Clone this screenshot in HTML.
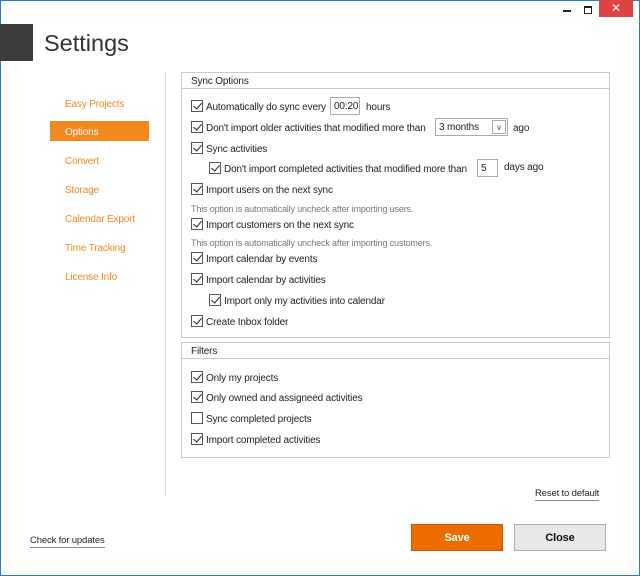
<!DOCTYPE html>
<html><head><style>
*{margin:0;padding:0;box-sizing:border-box}
body{width:640px;height:576px;background:#fff;font-family:"Liberation Sans",sans-serif;font-size:10px;letter-spacing:-0.15px;color:#222;position:relative;overflow:hidden}
.frame{position:absolute;inset:0;border:1px solid #2b7bc0;pointer-events:none}
.a{position:absolute;white-space:nowrap;line-height:14.5px}
.a:not([style*="background"]){margin-top:2px}
.nav{color:#f0891e;font-size:10px}
.cb{position:absolute;width:12px;height:12px;border:1px solid #555;background:#fff}
.cb.c::after{content:"";position:absolute;left:3px;top:0px;width:4px;height:7px;border:solid #222;border-width:0 1.5px 1.5px 0;transform:rotate(40deg)}
.box{position:absolute;border:1px solid #c8c8c8}
.inp{position:absolute;border:1px solid #aaa;background:#fff;font-size:10px;padding-left:3px;line-height:17px;height:18px}
.note{color:#777;font-size:9px}
</style></head><body>
<div class="frame"></div>
<div class="a" style="left:599px;top:0;width:34px;height:17px;background:#e04343;color:#fff;text-align:center;font-size:12px;line-height:16px">✕</div>
<div class="a" style="left:563px;top:10px;width:8px;height:1.5px;background:#222"></div>
<div class="a" style="left:584px;top:4px;width:8px;height:8px;border:1px solid #222;border-top-width:2px"></div>
<div class="a" style="left:0;top:24px;width:33px;height:37px;background:#3c3c3c"></div>
<div class="a" style="left:44px;top:28px;font-size:23.5px;line-height:normal;letter-spacing:0;color:#333">Settings</div>
<div class="a" style="left:165px;top:72px;width:1px;height:425px;background:#ddd"></div>
<div class="a nav" style="left:65px;top:96px">Easy Projects</div>
<div class="a" style="left:50px;top:121px;width:99px;height:20px;background:#f0891e"></div>
<div class="a" style="left:65px;top:125px;color:#fff;margin-top:1px">Options</div>
<div class="a nav" style="left:65px;top:153px">Convert</div>
<div class="a nav" style="left:65px;top:182px">Storage</div>
<div class="a nav" style="left:65px;top:211px">Calendar Export</div>
<div class="a nav" style="left:65px;top:240px">Time Tracking</div>
<div class="a nav" style="left:65px;top:269px">License Info</div>

<div class="box" style="left:181px;top:72px;width:429px;height:266px"></div>
<div class="a" style="left:182px;top:88px;width:427px;height:1px;background:#c8c8c8"></div>
<div class="a" style="left:191px;top:73px">Sync Options</div>

<div class="cb c" style="left:191px;top:100px"></div><div class="a" style="left:206px;top:99px">Automatically do sync every</div>
<div class="inp" style="left:330px;top:97px;width:30px">00:20</div><div class="a" style="left:366px;top:99px">hours</div>
<div class="cb c" style="left:191px;top:121px"></div><div class="a" style="left:206px;top:120px">Don't import older activities that modified more than</div>
<div class="inp" style="left:435px;top:118px;width:73px">3 months<span style="position:absolute;right:1px;top:1px;width:14px;height:14px;border:1px solid #aaa;font-size:8px;line-height:13px;text-align:center;color:#555">∨</span></div><div class="a" style="left:513px;top:120px">ago</div>
<div class="cb c" style="left:191px;top:142px"></div><div class="a" style="left:206px;top:141px">Sync activities</div>
<div class="cb c" style="left:209px;top:162px"></div><div class="a" style="left:224px;top:161px">Don't import completed activities that modified more than</div>
<div class="inp" style="left:477px;top:159px;width:21px">5</div><div class="a" style="left:504px;top:159px">days ago</div>
<div class="cb c" style="left:191px;top:183px"></div><div class="a" style="left:206px;top:182px">Import users on the next sync</div>
<div class="a note" style="left:191px;top:200px">This option is automatically uncheck after importing users.</div>
<div class="cb c" style="left:191px;top:218px"></div><div class="a" style="left:206px;top:217px">Import customers on the next sync</div>
<div class="a note" style="left:191px;top:234px">This option is automatically uncheck after importing customers.</div>
<div class="cb c" style="left:191px;top:252px"></div><div class="a" style="left:206px;top:251px">Import calendar by events</div>
<div class="cb c" style="left:191px;top:273px"></div><div class="a" style="left:206px;top:272px">Import calendar by activities</div>
<div class="cb c" style="left:209px;top:294px"></div><div class="a" style="left:224px;top:293px">Import only my activities into calendar</div>
<div class="cb c" style="left:191px;top:315px"></div><div class="a" style="left:206px;top:314px">Create Inbox folder</div>

<div class="box" style="left:181px;top:342px;width:429px;height:116px"></div>
<div class="a" style="left:182px;top:358px;width:427px;height:1px;background:#c8c8c8"></div>
<div class="a" style="left:191px;top:343px">Filters</div>
<div class="cb c" style="left:191px;top:371px"></div><div class="a" style="left:206px;top:370px">Only my projects</div>
<div class="cb c" style="left:191px;top:391px"></div><div class="a" style="left:206px;top:390px">Only owned and assigneed activities</div>
<div class="cb" style="left:191px;top:412px"></div><div class="a" style="left:206px;top:411px">Sync completed projects</div>
<div class="cb c" style="left:191px;top:433px"></div><div class="a" style="left:206px;top:432px">Import completed activities</div>

<div class="a" style="left:535px;top:485px;font-size:9.5px;border-bottom:1px solid #888;line-height:13px">Reset to default</div>
<div class="a" style="left:30px;top:532px;font-size:9.5px;border-bottom:1px solid #888;line-height:13px">Check for updates</div>
<div class="a" style="left:411px;top:524px;width:92px;height:27px;background:#ec6c00;border:1px solid #c85a00;color:#fff;font-weight:bold;text-align:center;line-height:27px;font-size:11px">Save</div>
<div class="a" style="left:514px;top:524px;width:92px;height:27px;background:#e8e8e8;border:1px solid #aaa;color:#111;font-weight:bold;text-align:center;line-height:27px;font-size:11px">Close</div>
</body></html>
